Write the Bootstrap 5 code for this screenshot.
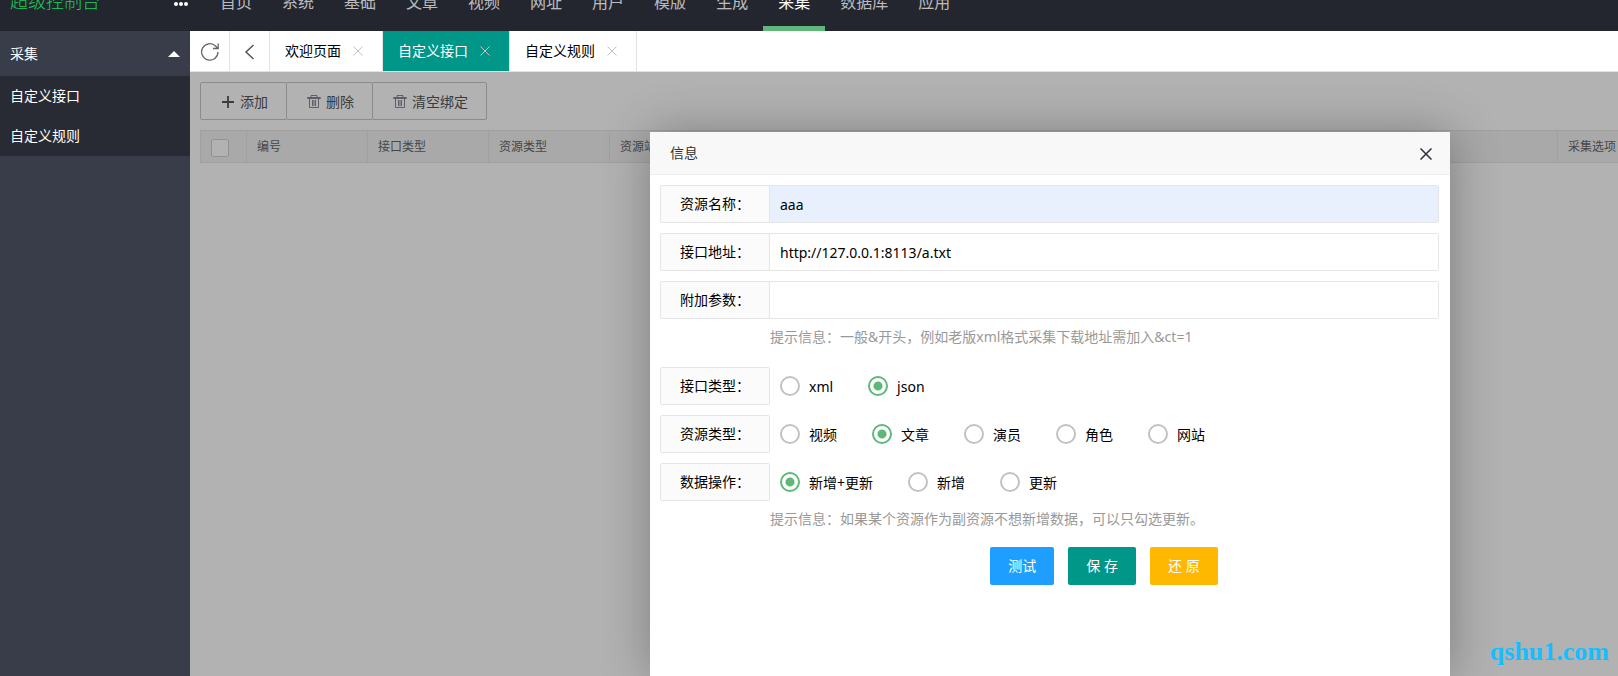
<!DOCTYPE html>
<html lang="zh-CN">
<head>
<meta charset="utf-8">
<meta name="viewport" content="width=device-width, initial-scale=1">
<title>超级控制台</title>
<link href="https://cdn.jsdelivr.net/npm/bootstrap@5.3.0/dist/css/bootstrap.min.css" rel="stylesheet">
<style>
body{font:14px/24px "Noto Sans","Noto Sans CJK SC",sans-serif;color:#000}
a{text-decoration:none}
.topbar{height:31px;background:#23262e}
.topbar-inner{height:60px}
.brand{width:160px;padding-left:10px;font-size:18px;font-weight:300;color:#16d05a}
.more{width:45px;padding-left:13px;margin-top:6px}
.top-menu a{display:block;padding:0 15px;font-size:16px;line-height:62px;color:rgba(255,255,255,.7);white-space:nowrap;border-bottom:5px solid transparent;height:60px}
.top-menu a.active{color:#fff;border-bottom-color:#5fb878}
.side{width:190px;background:#393d49}
.side a{color:#fff;padding:0 10px;display:flex;align-items:center}
.side .group-head{height:45px}
.side .sub{background:#282b33}
.side .sub a{height:40px}
.tabs{height:41px;border-bottom:1px solid #e2e2e2}
.tabs>*{border:0;border-right:1px solid #e2e2e2;background:#fff;height:40px}
.tool{width:40px;padding:0}
.tab{padding:0 19px 0 15px}
.tab a{color:#000}
.tab .x{margin-left:12px;color:#c2c2c2}
.tab.active{background:#009688}
.tab.active a{color:#fff}
.x{border:0;background:none;padding:0;display:flex}
.pane{padding:10px 0 0 10px}
.tool-btn{height:38px;padding:1px 18px 0 19px;border:1px solid #c9c9c9;border-radius:2px;background:#fff;color:#555;font-size:14px;display:flex;align-items:center;gap:4px}
.tool-btn+.tool-btn{margin-left:-1px}
.grid{width:1500px;table-layout:fixed;margin-top:10px;font-size:12px;color:#666;border-collapse:collapse}
.grid th{height:32px;padding:0 10px;font-weight:400;background:#f2f2f2;border:1px solid #e6e6e6;line-height:20px;white-space:nowrap}
.grid input{appearance:none;display:block;width:18px;height:18px;margin:2px 0 0 0;border:1px solid #d2d2d2;border-radius:2px;background:#fff}
.shade{background:rgba(0,0,0,.3);padding:60px 168px 0 0}
.dialog{width:800px;background:#fff;border-radius:2px 2px 0 0;box-shadow:1px 1px 50px rgba(0,0,0,.3)}
.dialog-head{height:43px;padding:0 18px 0 20px;background:#f8f8f8;border-bottom:1px solid #eee;color:#333}
.dialog-head .x{padding-top:2px}
.dialog form{padding:10px 11px 0 10px}
.field{display:flex;height:38px;margin-bottom:10px}
.tag{flex:0 0 110px;border:1px solid #e6e6e6;border-radius:2px;background:#fbfbfb;text-align:center;line-height:36px}
.field input[type=text]{flex:1;min-width:0;border:1px solid #e6e6e6;border-radius:0 2px 2px 0;margin-left:-1px;padding:2px 10px 0;color:#000;outline:0}
.field input.filled{background:#e8f0fe}
.hint{margin:-2px 0 20px 110px;line-height:20px;color:#999}
.choices{display:flex;padding-left:10px}
.choices label{display:flex;align-items:center;gap:9px;margin-right:35px;padding-top:2px;white-space:nowrap}
.choices input{appearance:none;width:20px;height:20px;margin:0 0 3px;border:2px solid #c2c2c2;border-radius:50%;background:#fff}
.choices input:checked{border-color:#5fb878;background:radial-gradient(circle,#5fb878 0 4px,#fff 5px)}
.actions{margin:-2px 0 0 109px;gap:14px}
.act{height:38px;padding:0 18px;border:0;border-radius:2px;color:#fff}
.blue{background:#1e9fff}.teal{background:#009688}.amber{background:#ffb800}
.watermark{right:9px;bottom:8px;font:bold 26px/32px "Liberation Serif",serif;color:#14bfff}
</style>
</head>
<body>
<div class="vh-100 d-flex flex-column overflow-hidden position-relative">
  <header class="topbar d-flex align-items-end overflow-hidden flex-shrink-0">
    <div class="topbar-inner d-flex align-items-center flex-shrink-0">
      <div class="brand">超级控制台</div>
      <svg class="more" height="6" viewBox="0 0 32 6" fill="#fff"><circle cx="3" cy="3" r="2"/><circle cx="8" cy="3" r="2"/><circle cx="13" cy="3" r="2"/></svg>
      <nav class="top-menu d-flex">
        <a href="#">首页</a><a href="#">系统</a><a href="#">基础</a><a href="#">文章</a><a href="#">视频</a><a href="#">网址</a><a href="#">用户</a><a href="#">模版</a><a href="#">生成</a><a href="#" class="active">采集</a><a href="#">数据库</a><a href="#">应用</a>
      </nav>
    </div>
  </header>
  <div class="d-flex flex-grow-1 overflow-hidden">
    <aside class="side flex-shrink-0">
      <a href="#" class="group-head justify-content-between">采集<svg width="12" height="6" viewBox="0 0 12 6"><path d="M0 6 6 0l6 6z" fill="#fff"/></svg></a>
      <nav class="sub"><a href="#">自定义接口</a><a href="#">自定义规则</a></nav>
    </aside>
    <main class="flex-grow-1 d-flex flex-column overflow-hidden">
      <div class="tabs d-flex flex-shrink-0">
        <button class="tool" aria-label="刷新"><svg width="20" height="20" viewBox="0 0 20 20" fill="none" stroke="#666" stroke-width="1.3"><path d="M18 10A8.200 8.200 0 1 1 15.500 4L18 6.500M18.200 1.500V6.500H13"/></svg></button>
        <button class="tool" aria-label="后退"><svg width="20" height="20" viewBox="0 0 20 20" fill="none" stroke="#555" stroke-width="1.5"><path d="M13.500 3 6 10l7.500 7"/></svg></button>
        <div class="tab d-flex align-items-center"><a href="#">欢迎页面</a><button class="x" aria-label="关闭"><svg width="10" height="10" viewBox="0 0 10 10" stroke="currentColor"><path d="m.5.5 9 9m0-9-9 9"/></svg></button></div>
        <div class="tab active d-flex align-items-center"><a href="#">自定义接口</a><button class="x" aria-label="关闭"><svg width="10" height="10" viewBox="0 0 10 10" stroke="currentColor"><path d="m.5.5 9 9m0-9-9 9"/></svg></button></div>
        <div class="tab d-flex align-items-center"><a href="#">自定义规则</a><button class="x" aria-label="关闭"><svg width="10" height="10" viewBox="0 0 10 10" stroke="currentColor"><path d="m.5.5 9 9m0-9-9 9"/></svg></button></div>
      </div>
      <div class="pane flex-grow-1 position-relative overflow-hidden">
        <div class="d-flex">
          <button class="tool-btn"><svg width="16" height="16" viewBox="0 0 16 16" stroke="#555" stroke-width="1.800"><path d="M8 2v12M2 8h12"/></svg>添加</button>
          <button class="tool-btn"><svg width="16" height="16" viewBox="0 0 16 16" fill="none" stroke="#858996"><path d="M1.500 3.500h13v1h-13zM5 3.500v-2h6v2M3.500 4.500v9h9v-9M6.500 6v6M8 6v6M9.500 6v6"/></svg>删除</button>
          <button class="tool-btn"><svg width="16" height="16" viewBox="0 0 16 16" fill="none" stroke="#858996"><path d="M1.500 3.500h13v1h-13zM5 3.500v-2h6v2M3.500 4.500v9h9v-9M6.500 6v6M8 6v6M9.500 6v6"/></svg>清空绑定</button>
        </div>
        <table class="grid">
          <colgroup><col style="width:46px"><col style="width:121px"><col style="width:121px"><col style="width:121px"><col><col style="width:142px"></colgroup>
          <thead><tr><th><input type="checkbox" aria-label="全选"></th><th>编号</th><th>接口类型</th><th>资源类型</th><th>资源站</th><th>采集选项</th></tr></thead>
        </table>
        <div class="shade position-absolute top-0 start-0 w-100 h-100 d-flex justify-content-end">
          <section class="dialog" role="dialog" aria-label="信息">
            <div class="dialog-head d-flex align-items-center justify-content-between">信息<button class="x" aria-label="关闭"><svg width="12" height="12" viewBox="0 0 12 12" stroke="#2e2d3c" stroke-width="1.500"><path d="m.5.500 11 11m0-11-11 11"/></svg></button></div>
            <form>
              <div class="field"><label class="tag" for="name">资源名称：</label><input class="filled" type="text" id="name" value="aaa"></div>
              <div class="field"><label class="tag" for="url">接口地址：</label><input type="text" id="url" value="http://127.0.0.1:8113/a.txt"></div>
              <div class="field"><label class="tag" for="param">附加参数：</label><input type="text" id="param"></div>
              <p class="hint">提示信息：一般&amp;开头，例如老版xml格式采集下载地址需加入&amp;ct=1</p>
              <div class="field" role="radiogroup" aria-labelledby="t1"><div class="tag" id="t1">接口类型：</div><div class="choices"><label><input type="radio" name="api">xml</label><label><input type="radio" name="api" checked>json</label></div></div>
              <div class="field" role="radiogroup" aria-labelledby="t2"><div class="tag" id="t2">资源类型：</div><div class="choices"><label><input type="radio" name="res">视频</label><label><input type="radio" name="res" checked>文章</label><label><input type="radio" name="res">演员</label><label><input type="radio" name="res">角色</label><label><input type="radio" name="res">网站</label></div></div>
              <div class="field" role="radiogroup" aria-labelledby="t3"><div class="tag" id="t3">数据操作：</div><div class="choices"><label><input type="radio" name="op" checked>新增+更新</label><label><input type="radio" name="op">新增</label><label><input type="radio" name="op">更新</label></div></div>
              <p class="hint">提示信息：如果某个资源作为副资源不想新增数据，可以只勾选更新。</p>
              <div class="actions d-flex justify-content-center"><button type="button" class="act blue">测试</button><button type="submit" class="act teal">保 存</button><button type="reset" class="act amber">还 原</button></div>
            </form>
          </section>
        </div>
      </div>
    </main>
  </div>
  <div class="watermark position-absolute">qshu1.com</div>
</div>
<script src="https://cdn.jsdelivr.net/npm/bootstrap@5.3.0/dist/js/bootstrap.bundle.min.js"></script>
</body>
</html>
